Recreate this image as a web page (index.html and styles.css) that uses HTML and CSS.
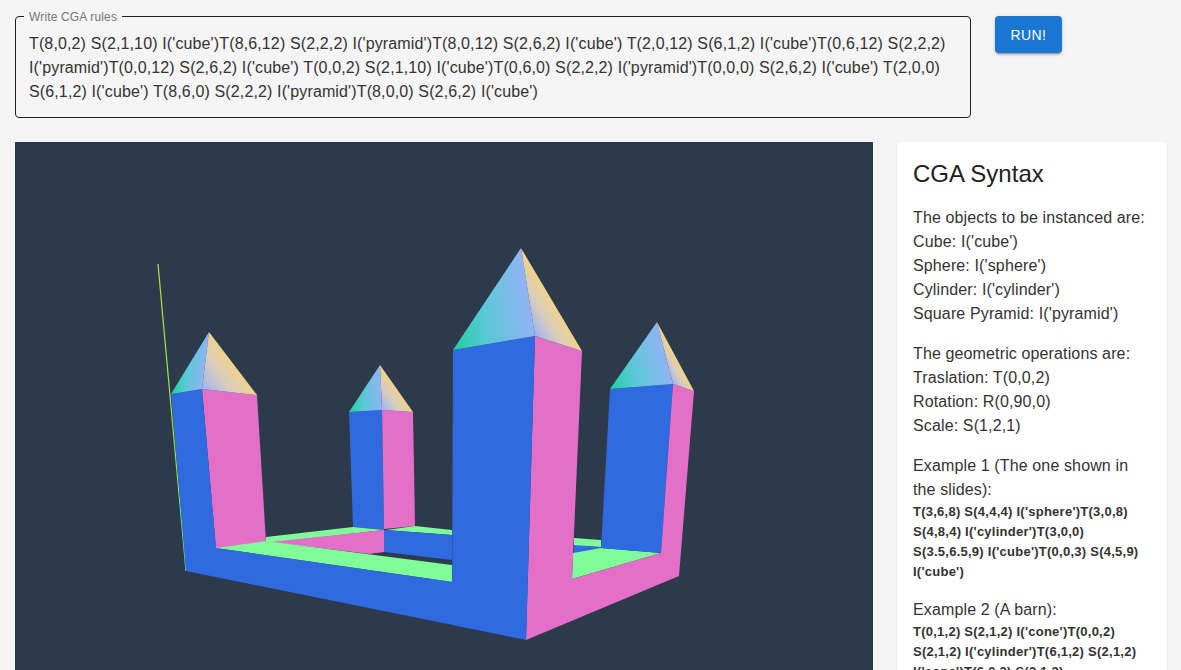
FILE: index.html
```html
<!DOCTYPE html>
<html lang="en">
<head>
    <meta charset="UTF-8">
    <meta name="viewport" content="width=device-width, initial-scale=1.0">
    <title>CGA Rules</title>
    <link rel="stylesheet" href="styles.css">
</head>
<body>
    <div class="top-row">
        <fieldset class="rules-field">
            <legend>Write CGA rules</legend>
            <div class="rules-text">T(8,0,2) S(2,1,10) I('cube')T(8,6,12) S(2,2,2) I('pyramid')T(8,0,12) S(2,6,2) I('cube') T(2,0,12) S(6,1,2) I('cube')T(0,6,12) S(2,2,2) I('pyramid')T(0,0,12) S(2,6,2) I('cube') T(0,0,2) S(2,1,10) I('cube')T(0,6,0) S(2,2,2) I('pyramid')T(0,0,0) S(2,6,2) I('cube') T(2,0,0) S(6,1,2) I('cube') T(8,6,0) S(2,2,2) I('pyramid')T(8,0,0) S(2,6,2) I('cube')</div>
        </fieldset>
        <button class="run-button" type="button">Run!</button>
    </div>
    <div class="main-row">
        <svg class="scene" viewBox="15 142 858 600" width="858" height="600" aria-label="3D model of the CGA rules">
            <defs>
                <linearGradient id="leftA" gradientUnits="userSpaceOnUse" x1="171" y1="394" x2="201" y2="398">
                    <stop offset="0" stop-color="#1ed0a0"/><stop offset="0.45" stop-color="#5cc8d8"/><stop offset="1" stop-color="#90b4f4"/>
                </linearGradient>
                <linearGradient id="leftB" gradientUnits="userSpaceOnUse" x1="202" y1="389" x2="234" y2="365">
                    <stop offset="0" stop-color="#9cb4ee"/><stop offset="0.55" stop-color="#d8ccc0"/><stop offset="1" stop-color="#eed28c"/>
                </linearGradient>
                <linearGradient id="midA" gradientUnits="userSpaceOnUse" x1="349" y1="412" x2="382" y2="410">
                    <stop offset="0" stop-color="#1ed0a0"/><stop offset="0.45" stop-color="#5cc8d8"/><stop offset="1" stop-color="#90b4f4"/>
                </linearGradient>
                <linearGradient id="midB" gradientUnits="userSpaceOnUse" x1="382" y1="410" x2="402" y2="396">
                    <stop offset="0" stop-color="#9cb4ee"/><stop offset="0.55" stop-color="#d8ccc0"/><stop offset="1" stop-color="#eed28c"/>
                </linearGradient>
                <linearGradient id="frontA" gradientUnits="userSpaceOnUse" x1="453" y1="350" x2="535" y2="337">
                    <stop offset="0" stop-color="#1ed0a0"/><stop offset="0.45" stop-color="#5cc8d8"/><stop offset="1" stop-color="#90b4f4"/>
                </linearGradient>
                <linearGradient id="frontB" gradientUnits="userSpaceOnUse" x1="535" y1="336" x2="563" y2="319">
                    <stop offset="0" stop-color="#9cb4ee"/><stop offset="0.55" stop-color="#d8ccc0"/><stop offset="1" stop-color="#eed28c"/>
                </linearGradient>
                <linearGradient id="rightA" gradientUnits="userSpaceOnUse" x1="610" y1="389" x2="670" y2="373">
                    <stop offset="0" stop-color="#1ed0a0"/><stop offset="0.45" stop-color="#5cc8d8"/><stop offset="1" stop-color="#90b4f4"/>
                </linearGradient>
                <linearGradient id="rightB" gradientUnits="userSpaceOnUse" x1="673" y1="384" x2="686" y2="377">
                    <stop offset="0" stop-color="#9cb4ee"/><stop offset="0.55" stop-color="#d8ccc0"/><stop offset="1" stop-color="#eed28c"/>
                </linearGradient>
                <linearGradient id="axis" gradientUnits="userSpaceOnUse" x1="158" y1="264" x2="186" y2="571">
                    <stop offset="0" stop-color="#b4e43c"/><stop offset="0.5" stop-color="#9ce830"/><stop offset="1" stop-color="#5ce090"/>
                </linearGradient>
            </defs>

            <line x1="158" y1="264" x2="186" y2="571" stroke="url(#axis)" stroke-width="1.2"/>

            <!-- back tower and floor -->
            <polygon class="blue" points="349,412 382,410 384,530 353,527"/>
            <polygon class="pink" points="382,410 413,412 415,526 384,529"/>
            <polygon fill="url(#midA)" points="380,365 349,412 382,410"/>
            <polygon fill="url(#midB)" points="380,365 382,410 413,412"/>
            <polygon class="green" points="266,537 353,527 384,530 270,543 266,543"/>
            <polygon class="green" points="386,530 415,526 452,530 452,535"/>
            <polygon class="blue" points="384,530 452,535 452,560 384,552"/>
            <polygon class="pink" points="270,542 384,530 384,552 370,554"/>

            <!-- left tower -->
            <polygon class="pink" points="202,389 257,395 266,542 216,549"/>
            <polygon class="green" points="216,548 266,541 452,565 452,582"/>
            <polygon class="blue" points="171,394 202,389 216,548 453,582 453,625 186,571"/>
            <polygon fill="url(#leftA)" points="209,332 171,394 202,389"/>
            <polygon fill="url(#leftB)" points="209,332 202,389 257,395"/>

            <!-- right tower and floor -->
            <polygon class="green" points="574,538 601,540 601,547 574,546"/>
            <polygon class="blue" points="574,545 601,547 600,549 574,554"/>
            <polygon class="green" points="573,553 601,548 661,553 572,579"/>
            <polygon class="blue" points="610,389 673,384 661,553 601,548"/>
            <polygon class="pink" points="673,384 694,391 679,576 526,640 535,336 582,351 572,579 661,553"/>
            <polygon fill="url(#rightA)" points="657,322 610,389 673,384"/>
            <polygon fill="url(#rightB)" points="657,322 673,384 694,391"/>

            <!-- front tower -->
            <polygon class="blue" points="453,350 535,336 526,640 452,625"/>
            <polygon fill="url(#frontA)" points="521,248 453,350 535,336"/>
            <polygon fill="url(#frontB)" points="521,248 535,336 582,351"/>
        </svg>

        <aside class="syntax-card">
            <h2>CGA Syntax</h2>
            <p>The objects to be instanced are:<br>Cube: I('cube')<br>Sphere: I('sphere')<br>Cylinder: I('cylinder')<br>Square Pyramid: I('pyramid')</p>
            <p>The geometric operations are:<br>Traslation: T(0,0,2)<br>Rotation: R(0,90,0)<br>Scale: S(1,2,1)</p>
            <p>Example 1 (The one shown in the slides):</p>
            <p class="code">T(3,6,8) S(4,4,4) I('sphere')T(3,0,8) S(4,8,4) I('cylinder')T(3,0,0) S(3.5,6.5,9) I('cube')T(0,0,3) S(4,5,9) I('cube')</p>
            <p>Example 2 (A barn):</p>
            <p class="code">T(0,1,2) S(2,1,2) I('cone')T(0,0,2) S(2,1,2) I('cylinder')T(6,1,2) S(2,1,2) I('cone')T(6,0,2) S(2,1,2)</p>
        </aside>
    </div>
</body>
</html>
```

FILE: styles.css
```css
html, body {
    height: 670px;
    overflow: hidden;
}
body {
    font-family: "Liberation Sans", Arial, sans-serif;
    background-color: #f5f5f5;
    color: #212121;
    margin: 0;
    padding: 16px 14px 0 15px;
    box-sizing: border-box;
}
.top-row {
    display: flex;
    align-items: flex-start;
    gap: 24px;
}
.rules-field {
    width: 956px;
    height: 102px;
    box-sizing: border-box;
    margin: 0;
    padding: 9px 13px 0;
    border: 1px solid #212121;
    border-radius: 4px;
    position: relative;
}
.rules-field legend {
    font-size: 12px;
    line-height: 12px;
    letter-spacing: 0.15px;
    color: #757575;
    padding: 0 5px;
    margin-left: -5px;
    position: absolute;
    top: -6px;
    left: 13px;
    background: #f5f5f5;
}
.rules-text {
    font-size: 16px;
    line-height: 24px;
    letter-spacing: 0.13px;
    color: #333;
    margin-top: 6px;
}
.run-button {
    width: 67px;
    height: 37px;
    padding: 0;
    border: none;
    border-radius: 4px;
    background-color: #1976d2;
    color: #fff;
    font-family: inherit;
    font-size: 14px;
    letter-spacing: 0.4px;
    text-transform: uppercase;
    cursor: pointer;
    box-shadow: 0 3px 1px -2px rgba(0, 0, 0, 0.2), 0 2px 2px rgba(0, 0, 0, 0.14), 0 1px 5px rgba(0, 0, 0, 0.12);
}
.main-row {
    display: flex;
    align-items: flex-start;
    gap: 24px;
    margin-top: 24px;
}
.scene {
    display: block;
    flex: none;
    background-color: #2c3a4b;
}
.blue {
    fill: #2f6ae0;
}
.pink {
    fill: #e36fc9;
}
.green {
    fill: #80fc98;
}
.syntax-card {
    width: 270px;
    flex: none;
    box-sizing: border-box;
    padding: 16px;
    background: #fff;
    border-radius: 4px;
    box-shadow: 0 2px 1px -1px rgba(0, 0, 0, 0.1), 0 1px 3px rgba(0, 0, 0, 0.08);
}
.syntax-card h2 {
    font-size: 24px;
    font-weight: 400;
    line-height: 32px;
    margin: 0 0 16px;
}
.syntax-card p {
    font-size: 16px;
    line-height: 24px;
    letter-spacing: 0.13px;
    margin: 0 0 16px;
    color: #333;
}
.syntax-card .code {
    font-size: 13px;
    font-weight: 700;
    line-height: 20px;
    letter-spacing: 0.25px;
}
.syntax-card p:has(+ .code) {
    margin-bottom: 0;
}
```
